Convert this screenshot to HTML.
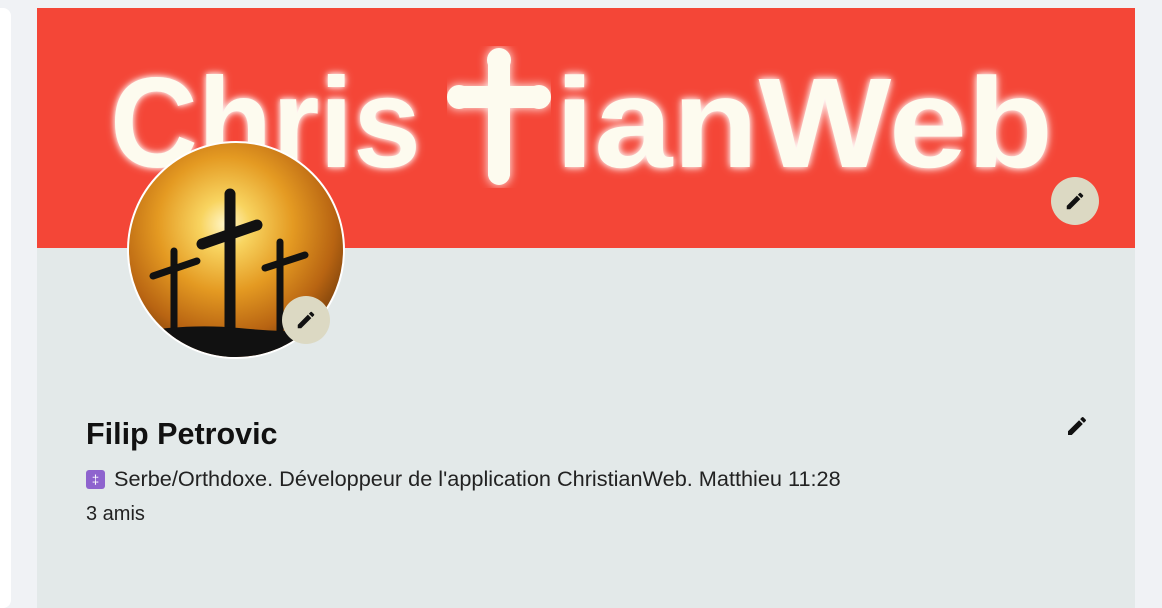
<!DOCTYPE html>
<html><head><meta charset="utf-8"><style>
body{margin:0;width:1162px;height:570px;background:#f0f2f5;position:relative;overflow:hidden;font-family:"Liberation Sans",sans-serif}
.side{position:absolute;left:-20px;top:8px;width:31px;height:600px;background:#fff;border-radius:8px}
.card{position:absolute;left:37px;top:8px;width:1098px;height:600px;background:#e3e9e9}
.banner{position:absolute;left:0;top:0;width:1098px;height:240px;background:#f44637;overflow:hidden}
.bt{position:absolute;top:52px;font-size:128px;font-weight:bold;color:#fdfbef;text-shadow:0 0 6px #fff,0 0 10px rgba(255,255,255,.6);transform-origin:left top;line-height:1}
.edit{position:absolute;width:48px;height:48px;border-radius:50%;background:#dcd9c3;display:flex;align-items:center;justify-content:center}
.av{position:absolute;left:90px;top:133px;width:214px;height:214px;border-radius:50%;border:2px solid #fff;overflow:hidden;background:radial-gradient(circle at 45% 38%,#fff6c8 0,#f8d460 14%,#e49a22 38%,#b86412 62%,#5a2e08 85%,#1a0c02 100%)}
.name{position:absolute;left:49px;top:409px;font-size:30.5px;font-weight:bold;color:#111}
.bio{position:absolute;left:49px;top:458px;font-size:21.7px;color:#222;display:flex;align-items:center}
.amis{position:absolute;left:49px;top:495px;font-size:20px;color:#222}
.ic{width:19px;height:19px;background:#8e63ce;border-radius:3px;margin-right:9px;color:#fff;font-size:13px;text-align:center;line-height:19px}
</style></head><body>
<div class="side"></div>
<div class="card">
 <div class="banner">
  <div class="bt" style="left:73px;transform:scaleX(.95)">Chris</div>
  <svg style="position:absolute;left:410px;top:38px" width="104" height="142" viewBox="0 0 104 142"><g fill="#fdfbef" style="filter:drop-shadow(0 0 5px #fff)"><rect x="41" y="12" width="22" height="122" rx="6"/><rect x="8" y="40" width="88" height="22" rx="6"/><circle cx="52" cy="14" r="12"/><circle cx="12" cy="51" r="12"/><circle cx="92" cy="51" r="12"/><circle cx="52" cy="128" r="11"/></g></svg>
  <div class="bt" style="left:518px;transform:scaleX(1.1)">ianWeb</div>
 </div>
 <div class="edit" style="left:1014px;top:169px"><svg width="22" height="22" viewBox="0 0 24 24"><path d="M3 17.25V21h3.75L17.81 9.94l-3.75-3.75L3 17.25zM20.71 7.04a1 1 0 0 0 0-1.41l-2.34-2.34a1 1 0 0 0-1.41 0l-1.83 1.83 3.75 3.75 1.83-1.83z" fill="#111"/></svg></div>
 <div class="av"><svg width="214" height="214" viewBox="0 0 214 214"><g stroke="#111" stroke-linecap="round" fill="none"><path d="M101 51V214" stroke-width="11"/><path d="M73 101L128 82" stroke-width="11"/><path d="M45 108V214" stroke-width="7"/><path d="M24 133L68 118" stroke-width="7"/><path d="M151 99V214" stroke-width="7"/><path d="M136 125L176 112" stroke-width="7"/></g><path d="M0 190Q60 180 110 185T214 188V214H0z" fill="#111"/></svg></div>
 <div class="edit" style="left:245px;top:288px"><svg width="22" height="22" viewBox="0 0 24 24"><path d="M3 17.25V21h3.75L17.81 9.94l-3.75-3.75L3 17.25zM20.71 7.04a1 1 0 0 0 0-1.41l-2.34-2.34a1 1 0 0 0-1.41 0l-1.83 1.83 3.75 3.75 1.83-1.83z" fill="#111"/></svg></div>
 <svg style="position:absolute;left:1028px;top:406px" width="24" height="24" viewBox="0 0 24 24"><path d="M3 17.25V21h3.75L17.81 9.94l-3.75-3.75L3 17.25zM20.71 7.04a1 1 0 0 0 0-1.41l-2.34-2.34a1 1 0 0 0-1.41 0l-1.83 1.83 3.75 3.75 1.83-1.83z" fill="#111"/></svg>
 <div class="name">Filip Petrovic</div>
 <div class="bio"><span class="ic">‡</span>Serbe/Orthdoxe. Développeur de l'application ChristianWeb. Matthieu 11:28</div>
 <div class="amis">3 amis</div>
</div>
</body></html>
